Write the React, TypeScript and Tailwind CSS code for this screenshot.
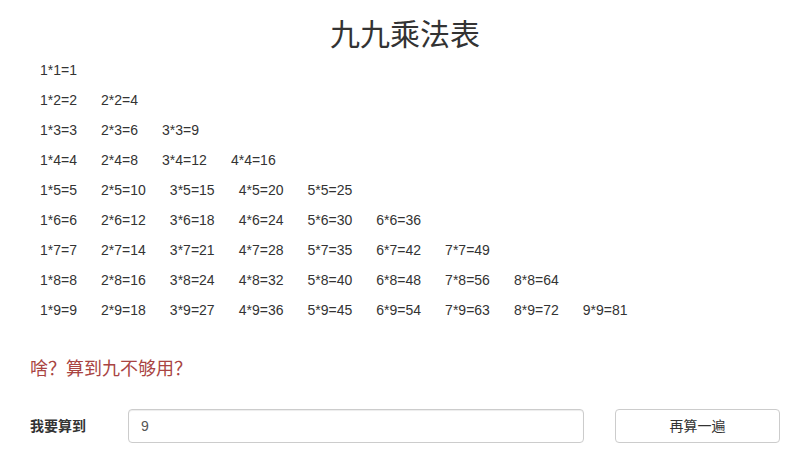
import React from 'react'

const font = { fontFamily: '"Liberation Sans", "Noto Sans CJK SC", sans-serif' }

export default function App() {
  const rows = [1, 2, 3, 4, 5, 6, 7, 8, 9]
  return (
    <div className="w-[805px] h-[463px] bg-white text-[#333] pl-[30px] pr-[25px]" style={font}>
      <h2 className="pt-[18px] text-[30px] leading-[33px] text-center font-normal">九九乘法表</h2>

      <div className="mt-[4px] pl-[10px]">
        {rows.map((j) => (
          <div key={j} className="flex gap-[24px] h-[30px] items-center text-[14px]">
            {rows
              .filter((i) => i <= j)
              .map((i) => (
                <span key={i}>
                  {i}*{j}={i * j}
                </span>
              ))}
          </div>
        ))}
      </div>

      <p className="mt-[32px] text-[18px] leading-[24px] text-[#a94442]">啥？算到九不够用？</p>

      <div className="mt-[28px] flex items-center">
        <label className="w-[98px] shrink-0 text-[14px] font-bold">我要算到</label>
        <input
          defaultValue="9"
          className="w-[456px] shrink-0 h-[34px] px-[12px] text-[14px] text-[#555] border border-[#ccc] rounded-[4px] outline-none shadow-[inset_0_1px_1px_rgba(0,0,0,0.075)]"
        />
        <button className="ml-[31px] w-[165px] shrink-0 h-[34px] text-[14px] text-[#333] bg-white border border-[#ccc] rounded-[4px]">
          再算一遍
        </button>
      </div>
    </div>
  )
}
